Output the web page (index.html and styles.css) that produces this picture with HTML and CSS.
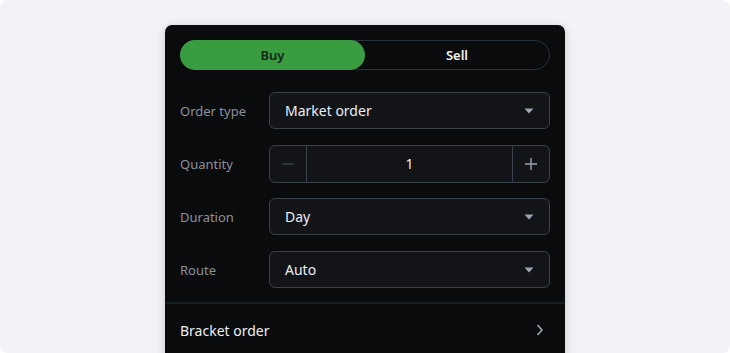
FILE: index.html
```html
<!DOCTYPE html>
<html>
<head>
<meta charset="utf-8">
<link rel="stylesheet" href="styles.css">
</head>
<body>
<div class="stage">
  <div class="panel">
    <div class="seg">
      <div class="seg-btn active">Buy</div>
      <div class="seg-btn">Sell</div>
    </div>
    <div class="form">
      <div class="row">
        <div class="label">Order type</div>
        <div class="field select">
          <span>Market order</span>
          <svg class="caret" width="10" height="6" viewBox="0 0 10 6"><path d="M0.5 0.5 H9.5 L5 5.5 Z" fill="#9ea3b3"/></svg>
        </div>
      </div>
      <div class="row">
        <div class="label">Quantity</div>
        <div class="field stepper">
          <div class="step minus"><svg width="12" height="12" viewBox="0 0 12 12"><path d="M0 6 H12" stroke="#3c4049" stroke-width="1.3"/></svg></div>
          <div class="qty">1</div>
          <div class="step plus"><svg width="12" height="12" viewBox="0 0 12 12"><path d="M0 6 H12 M6 0 V12" stroke="#9ea3b3" stroke-width="1.4"/></svg></div>
        </div>
      </div>
      <div class="row">
        <div class="label">Duration</div>
        <div class="field select">
          <span>Day</span>
          <svg class="caret" width="10" height="6" viewBox="0 0 10 6"><path d="M0.5 0.5 H9.5 L5 5.5 Z" fill="#9ea3b3"/></svg>
        </div>
      </div>
      <div class="row">
        <div class="label">Route</div>
        <div class="field select">
          <span>Auto</span>
          <svg class="caret" width="10" height="6" viewBox="0 0 10 6"><path d="M0.5 0.5 H9.5 L5 5.5 Z" fill="#9ea3b3"/></svg>
        </div>
      </div>
    </div>
    <div class="divider"></div>
    <div class="bracket">
      <span>Bracket order</span>
      <svg width="8" height="12" viewBox="0 0 8 12"><path d="M1.5 1 L6 6 L1.5 11" fill="none" stroke="#9ea3b3" stroke-width="1.6"/></svg>
    </div>
  </div>
</div>
</body>
</html>
```
FILE: styles.css
```css
html, body {
  margin: 0;
  padding: 0;
  background: #ffffff;
}
body {
  font-family: "Noto Sans", "Open Sans", sans-serif;
}
.stage {
  width: 730px;
  height: 353px;
  background: #f2f2f7;
  border-radius: 8px;
  overflow: hidden;
  padding-top: 25px;
  padding-left: 165px;
  box-sizing: border-box;
}
.panel {
  width: 400px;
  height: 340px;
  background: #0a0b0d;
  border-radius: 7px 7px 0 0;
  box-shadow: 0 2px 10px rgba(0, 0, 0, 0.18);
  padding-top: 15px;
  box-sizing: border-box;
}
.seg {
  margin: 0 15px;
  height: 30px;
  box-sizing: border-box;
  border: 1px solid #2c323b;
  border-radius: 15px;
  display: flex;
  align-items: stretch;
}
.seg-btn {
  flex: 1;
  display: flex;
  align-items: center;
  justify-content: center;
  color: #f1f2f4;
  font-size: 13px;
  font-weight: 600;
}
.seg-btn.active {
  flex: 0 0 185px;
  margin: -1px 0 -1px -1px;
  background: #3a9c40;
  color: #13211a;
  border-radius: 15px;
}
.form {
  margin: 22px 15px 0 15px;
  display: flex;
  flex-direction: column;
  gap: 16px;
}
.row {
  display: flex;
  align-items: center;
  height: 37px;
}
.label {
  width: 89px;
  color: #8b9099;
  font-size: 13px;
}
.field {
  width: 281px;
  height: 37px;
  box-sizing: border-box;
  border: 1px solid #3b414b;
  border-radius: 6px;
  background: #131418;
  color: #eceef1;
  font-size: 14px;
}
.select {
  display: flex;
  align-items: center;
  justify-content: space-between;
  padding: 0 15px 0 15px;
}
.caret {
  margin-top: 1px;
}
.stepper {
  display: flex;
  align-items: stretch;
  height: 38px;
}
.step {
  width: 36px;
  display: flex;
  align-items: center;
  justify-content: center;
}
.minus {
  border-right: 1px solid #3b414b;
}
.plus {
  border-left: 1px solid #3b414b;
}
.qty {
  flex: 1;
  display: flex;
  align-items: center;
  justify-content: center;
}
.divider {
  margin-top: 14px;
  height: 2px;
  background: #181d21;
}
.bracket {
  display: flex;
  align-items: center;
  justify-content: space-between;
  height: 52px;
  padding: 0 21px 0 15px;
  color: #eceef1;
  font-size: 14px;
}
```
